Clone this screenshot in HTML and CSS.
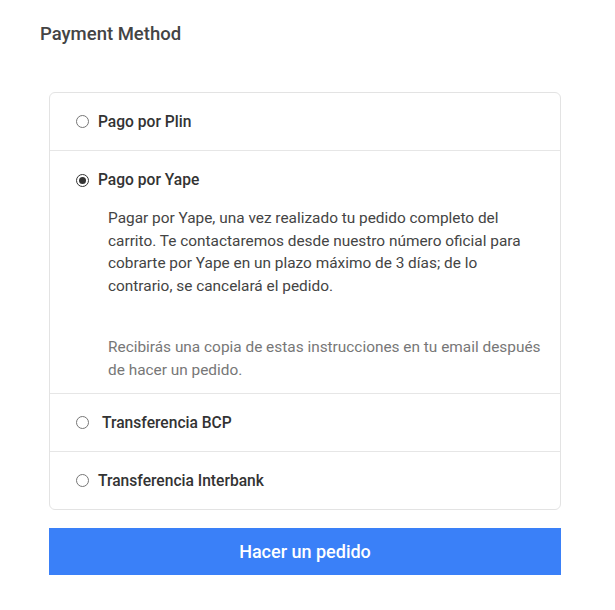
FILE: index.html
```html
<!DOCTYPE html>
<html>
<head>
<meta charset="utf-8">
<link rel="stylesheet" href="styles.css">
</head>
<body>
<div class="page">
  <h2 class="title">Payment Method</h2>
  <div class="card">
    <div class="row">
      <span class="radio"></span>
      <span class="label">Pago por Plin</span>
    </div>
    <div class="row row-open">
      <div class="row-head">
        <span class="radio checked"></span>
        <span class="label">Pago por Yape</span>
      </div>
      <div class="desc">
        <p class="desc-main">Pagar por Yape, una vez realizado tu pedido completo del carrito. Te contactaremos desde nuestro número oficial para cobrarte por Yape en un plazo máximo de 3 días; de lo contrario, se cancelará el pedido.</p>
        <p class="desc-note">Recibirás una copia de estas instrucciones en tu email después de hacer un pedido.</p>
      </div>
    </div>
    <div class="row">
      <span class="radio"></span>
      <span class="label label-bcp">Transferencia BCP</span>
    </div>
    <div class="row">
      <span class="radio"></span>
      <span class="label">Transferencia Interbank</span>
    </div>
  </div>
  <button class="submit">Hacer un pedido</button>
</div>
</body>
</html>
```
FILE: styles.css
```css
html, body {
  margin: 0;
  padding: 0;
  background: #fff;
}
body {
  font-family: Roboto, "Noto Sans", "Liberation Sans", sans-serif;
}
.page {
  padding: 22px 54px 0 49px;
  width: 512px;
}
.title {
  margin: 0 0 46px -9px;
  font-size: 18.5px;
  font-weight: 500;
  color: #444;
  line-height: 24px;
}
.card {
  border: 1px solid #e3e3e3;
  border-radius: 6px;
}
.row {
  display: flex;
  align-items: center;
  height: 57px;
  padding: 0 25px 0 26px;
  border-top: 1px solid #e6e6e6;
  box-sizing: content-box;
}
.row:first-child {
  border-top: none;
}
.row.row-open {
  display: block;
  height: auto;
  padding: 18px 12px 12px 26px;
}
.row-head {
  display: flex;
  align-items: center;
  height: 22px;
}
.radio {
  width: 11px;
  height: 11px;
  border: 1px solid #767676;
  border-radius: 50%;
  flex: none;
  margin-right: 9px;
  position: relative;
  box-sizing: content-box;
}
.radio.checked {
  border-color: #333;
}
.radio.checked::after {
  content: "";
  position: absolute;
  left: 2px;
  top: 2px;
  width: 7px;
  height: 7px;
  border-radius: 50%;
  background: #333;
}
.label {
  font-size: 15.6px;
  font-weight: 500;
  color: #333;
  line-height: 22px;
}
.label-bcp {
  margin-left: 4px;
}
.desc {
  padding-left: 32px;
  padding-top: 16px;
}
.desc p {
  margin: 0;
  font-size: 15.4px;
  line-height: 22.7px;
}
.desc-main {
  color: #444;
  padding-right: 12px;
}
.desc-note {
  color: #777;
  margin-top: 38px !important;
}
.submit {
  display: block;
  width: 512px;
  height: 47px;
  margin-top: 18px;
  border: none;
  background: #3a80f8;
  color: #fff;
  font-family: Roboto, "Noto Sans", "Liberation Sans", sans-serif;
  font-size: 18px;
  font-weight: 500;
  cursor: pointer;
}
```
